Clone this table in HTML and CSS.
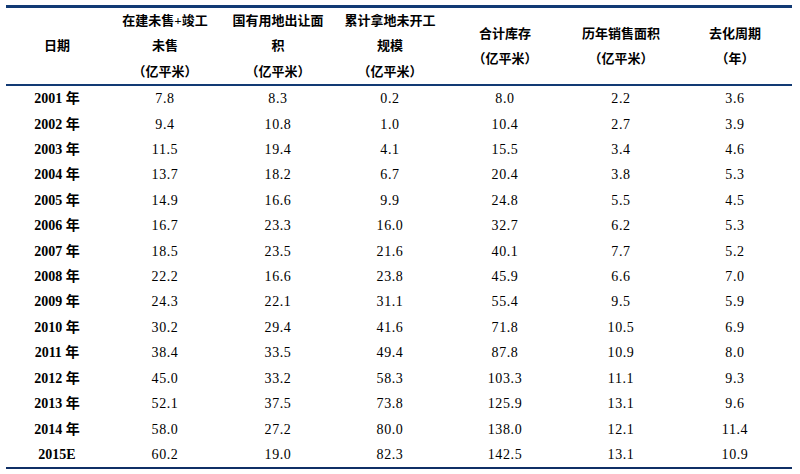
FILE: index.html
```html
<!DOCTYPE html>
<html lang="zh">
<head>
<meta charset="utf-8">
<link rel="stylesheet" href="styles.css">
</head>
<body>
<table class="data">
  <colgroup>
    <col class="c1"><col class="c2"><col class="c3"><col class="c4"><col class="c5"><col class="c6"><col class="c7">
  </colgroup>
  <thead>
    <tr>
      <th>日期</th>
      <th>在建未售+竣工<br>未售<br>（亿平米）</th>
      <th>国有用地出让面<br>积<br>（亿平米）</th>
      <th>累计拿地未开工<br>规模<br>（亿平米）</th>
      <th>合计库存<br>（亿平米）</th>
      <th>历年销售面积<br>（亿平米）</th>
      <th>去化周期<br>（年）</th>
    </tr>
  </thead>
  <tbody>
    <tr><td class="yr">2001 年</td><td>7.8</td><td>8.3</td><td>0.2</td><td>8.0</td><td>2.2</td><td>3.6</td></tr>
    <tr><td class="yr">2002 年</td><td>9.4</td><td>10.8</td><td>1.0</td><td>10.4</td><td>2.7</td><td>3.9</td></tr>
    <tr><td class="yr">2003 年</td><td>11.5</td><td>19.4</td><td>4.1</td><td>15.5</td><td>3.4</td><td>4.6</td></tr>
    <tr><td class="yr">2004 年</td><td>13.7</td><td>18.2</td><td>6.7</td><td>20.4</td><td>3.8</td><td>5.3</td></tr>
    <tr><td class="yr">2005 年</td><td>14.9</td><td>16.6</td><td>9.9</td><td>24.8</td><td>5.5</td><td>4.5</td></tr>
    <tr><td class="yr">2006 年</td><td>16.7</td><td>23.3</td><td>16.0</td><td>32.7</td><td>6.2</td><td>5.3</td></tr>
    <tr><td class="yr">2007 年</td><td>18.5</td><td>23.5</td><td>21.6</td><td>40.1</td><td>7.7</td><td>5.2</td></tr>
    <tr><td class="yr">2008 年</td><td>22.2</td><td>16.6</td><td>23.8</td><td>45.9</td><td>6.6</td><td>7.0</td></tr>
    <tr><td class="yr">2009 年</td><td>24.3</td><td>22.1</td><td>31.1</td><td>55.4</td><td>9.5</td><td>5.9</td></tr>
    <tr><td class="yr">2010 年</td><td>30.2</td><td>29.4</td><td>41.6</td><td>71.8</td><td>10.5</td><td>6.9</td></tr>
    <tr><td class="yr">2011 年</td><td>38.4</td><td>33.5</td><td>49.4</td><td>87.8</td><td>10.9</td><td>8.0</td></tr>
    <tr><td class="yr">2012 年</td><td>45.0</td><td>33.2</td><td>58.3</td><td>103.3</td><td>11.1</td><td>9.3</td></tr>
    <tr><td class="yr">2013 年</td><td>52.1</td><td>37.5</td><td>73.8</td><td>125.9</td><td>13.1</td><td>9.6</td></tr>
    <tr><td class="yr">2014 年</td><td>58.0</td><td>27.2</td><td>80.0</td><td>138.0</td><td>12.1</td><td>11.4</td></tr>
    <tr class="last"><td class="yr">2015E</td><td>60.2</td><td>19.0</td><td>82.3</td><td>142.5</td><td>13.1</td><td>10.9</td></tr>
  </tbody>
</table>
</body>
</html>
```
FILE: styles.css
```css
html, body {
  margin: 0;
  padding: 0;
  background: #ffffff;
}
body {
  padding: 5px 8px 0 6px;
  color: #000;
}
.data {
  width: 786px;
  border-collapse: separate;
  border-spacing: 0;
  table-layout: fixed;
}
.c1 { width: 102px; }
.c2 { width: 114px; }
.c3 { width: 112px; }
.c4 { width: 112px; }
.c5 { width: 118px; }
.c6 { width: 114px; }
.c7 { width: 114px; }
.data th {
  font-family: "Liberation Serif", "Noto Sans CJK SC", serif;
  font-weight: bold;
  font-size: 13px;
  line-height: 25.4px;
  padding: 0;
  text-align: center;
  vertical-align: middle;
  border-top: 3px solid #123a74;
  border-bottom: 2px solid #123a74;
  white-space: nowrap;
}
.data td {
  font-family: "Liberation Serif", "Noto Sans CJK SC", serif;
  font-size: 14px;
  line-height: 25.4px;
  height: 25.4px;
  padding: 0;
  text-align: center;
  vertical-align: middle;
  letter-spacing: 0.6px;
  white-space: nowrap;
}
.data td.yr {
  font-weight: bold;
  letter-spacing: 0;
}
.data tr.last td {
  border-bottom: 2px solid #0f2f66;
}
```
